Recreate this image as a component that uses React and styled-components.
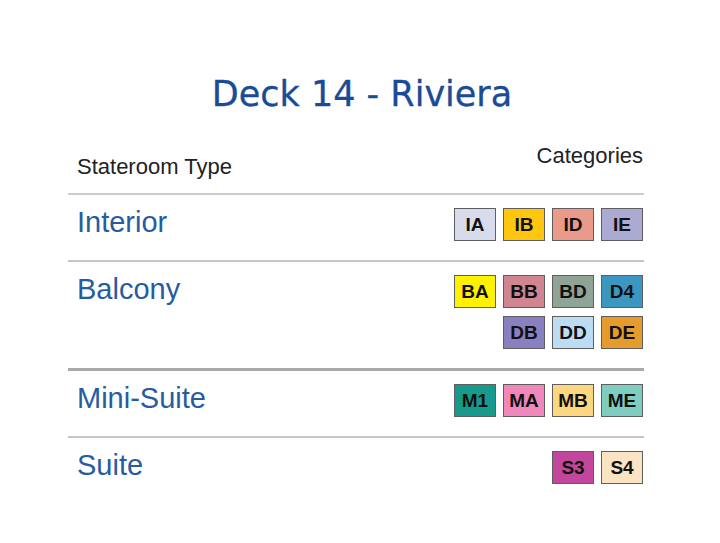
import React from "react";
import styled, { createGlobalStyle } from "styled-components";

const GlobalStyle = createGlobalStyle`
  body {
    margin: 0;
    background: #fff;
    font-family: "Liberation Sans", Arial, sans-serif;
  }
`;

// stateroom types and their category colours
const rows = [
  {
    name: "Interior",
    cats: [
      ["IA", "#d6dcec"],
      ["IB", "#fec60f"],
      ["ID", "#ea9a88"],
      ["IE", "#aaaad3"],
    ],
  },
  {
    name: "Balcony",
    cats: [
      ["BA", "#fff200"],
      ["BB", "#d08591"],
      ["BD", "#8fa396"],
      ["D4", "#3b97c0"],
      ["DB", "#8a80c0"],
      ["DD", "#bcdcf4"],
      ["DE", "#e59c2c"],
    ],
  },
  {
    name: "Mini-Suite",
    thick: true,
    cats: [
      ["M1", "#169a8c"],
      ["MA", "#f088bb"],
      ["MB", "#fdd780"],
      ["ME", "#7fcdc0"],
    ],
  },
  {
    name: "Suite",
    cats: [
      ["S3", "#c2479c"],
      ["S4", "#fbe4c3"],
    ],
  },
];

function App() {
  return (
    <Page>
      <GlobalStyle />
      <Title>Deck 14 - Riviera</Title>
      <Table>
        <HeaderRow>
          <TypeHead>Stateroom Type</TypeHead>
          <CatHead>Categories</CatHead>
        </HeaderRow>
        {rows.map((r) => (
          <Row key={r.name} thick={r.thick ? 1 : 0}>
            <Name>{r.name}</Name>
            <Badges>
              {r.cats.map(([code, color]) => (
                <Badge key={code} bg={color}>
                  {code}
                </Badge>
              ))}
            </Badges>
          </Row>
        ))}
      </Table>
    </Page>
  );
}

const Page = styled.div`
  width: 720px;
  min-height: 543px;
  padding-top: 74px;
  box-sizing: border-box;
`;

const Title = styled.h1`
  margin: 0;
  text-align: center;
  font-family: "Comic Sans MS", "DejaVu Sans", sans-serif;
  font-weight: normal;
  font-size: 35px;
  line-height: 41px;
  color: #1a4b97;
  padding-left: 4px;
  -webkit-text-stroke: 0.3px #1a4b97;
`;

const Table = styled.div`
  width: 576px;
  margin: 28px 0 0 68px;
`;

const HeaderRow = styled.div`
  display: flex;
  justify-content: space-between;
  align-items: flex-start;
  padding: 0 1px 13px 9px;
  border-bottom: 2px solid #cbcbcb;
  font-size: 22px;
  line-height: 26px;
  color: #222;
`;

const TypeHead = styled.div`
  margin-top: 11px;
`;

const CatHead = styled.div``;

const Row = styled.div`
  display: flex;
  justify-content: space-between;
  align-items: flex-start;
  padding: 13px 1px 19px 9px;
  border-top: ${(p) => (p.thick ? "3px solid #a9a9a9" : "2px solid #c6c6c6")};
  &:nth-child(2) {
    border-top: none;
  }
`;

const Name = styled.div`
  font-size: 29px;
  line-height: 28px;
  color: #275c9f;
`;

const Badges = styled.div`
  width: 190px;
  display: flex;
  flex-wrap: wrap;
  justify-content: flex-end;
  gap: 8px 7px;
`;

const Badge = styled.div`
  width: 42px;
  height: 33px;
  box-sizing: border-box;
  border: 1px solid #5e5e5e;
  background: ${(p) => p.bg};
  display: flex;
  align-items: center;
  justify-content: center;
  font-weight: bold;
  font-size: 19px;
  color: #111;
`;

export default App;
